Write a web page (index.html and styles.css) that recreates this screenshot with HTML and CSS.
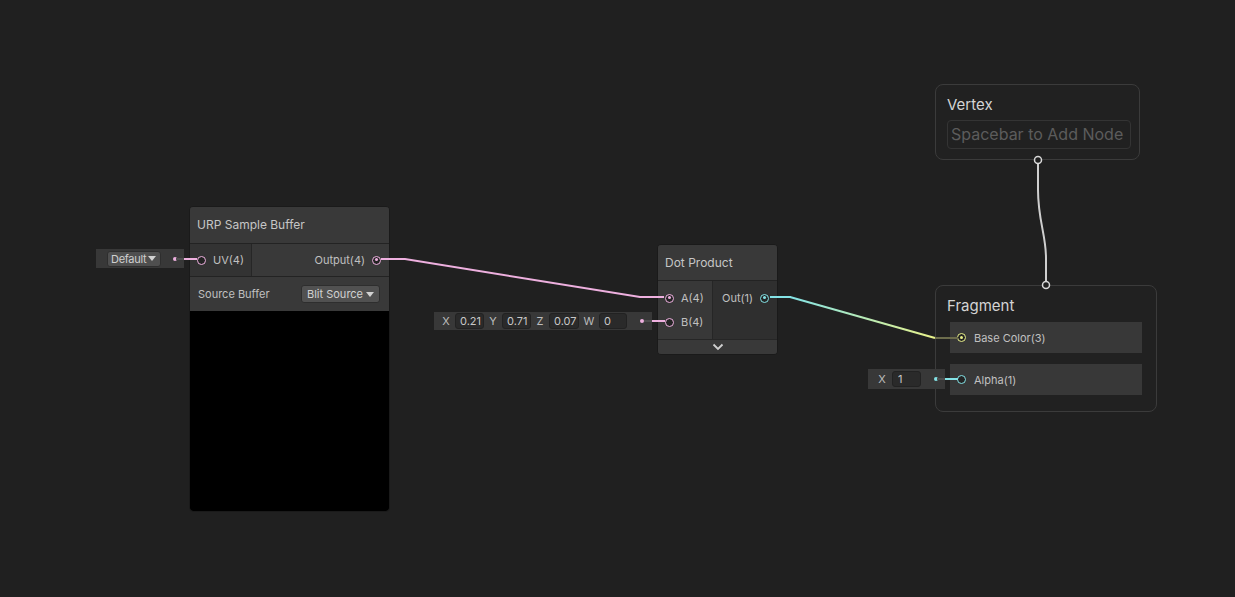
FILE: index.html
```html
<!DOCTYPE html>
<html>
<head>
<meta charset="utf-8">
<link rel="stylesheet" href="styles.css">
</head>
<body>
<div class="canvas">

  <!-- Vertex context -->
  <div class="context vertex">
    <div class="ctx-title">Vertex</div>
    <div class="placeholder">Spacebar to Add Node</div>
  </div>

  <!-- Fragment context -->
  <div class="context fragment">
    <div class="ctx-title">Fragment</div>
    <div class="block"><span class="port yellow on"></span><span class="label">Base Color(3)</span></div>
    <div class="block"><span class="port cyan"></span><span class="label">Alpha(1)</span></div>
  </div>

  <!-- URP Sample Buffer node -->
  <div class="node urp">
    <div class="node-title">URP Sample Buffer</div>
    <div class="ports">
      <div class="inputs">
        <div class="prow"><span class="port pink"></span><span class="label">UV(4)</span></div>
      </div>
      <div class="outputs">
        <div class="prow out"><span class="label">Output(4)</span><span class="port pink on"></span></div>
      </div>
    </div>
    <div class="setting">
      <span class="label">Source Buffer</span>
      <span class="dropdown">Blit Source<span class="tri"></span></span>
    </div>
    <div class="preview"></div>
  </div>

  <!-- Dot Product node -->
  <div class="node dot">
    <div class="node-title">Dot Product</div>
    <div class="ports">
      <div class="inputs">
        <div class="prow"><span class="port pink on"></span><span class="label">A(4)</span></div>
        <div class="prow"><span class="port pink"></span><span class="label">B(4)</span></div>
      </div>
      <div class="outputs">
        <div class="prow out"><span class="label">Out(1)</span><span class="port cyan on"></span></div>
      </div>
    </div>
    <div class="collapse">
      <svg width="12" height="8" viewBox="0 0 12 8"><path d="M1.5 1.5 L6 6 L10.5 1.5" fill="none" stroke="#d0d0d0" stroke-width="1.8"/></svg>
    </div>
  </div>

  <!-- inline input fields -->
  <div class="field f-default">
    <span class="dropdown small"><span class="dtext">Default</span><span class="tri"></span></span>
    <span class="fdot pink"></span>
  </div>

  <div class="field f-vec">
    <span class="axis">X</span><span class="num w29">0.21</span>
    <span class="axis">Y</span><span class="num w29">0.71</span>
    <span class="axis">Z</span><span class="num w30">0.07</span>
    <span class="axis aw">W</span><span class="num w28">0</span>
    <span class="fdot pink"></span>
  </div>

  <div class="field f-alpha">
    <span class="axis">X</span><span class="num wa">1</span>
    <span class="fdot cyan"></span>
  </div>

  <svg class="wires" width="1235" height="597" viewBox="0 0 1235 597">
    <defs>
      <linearGradient id="cy" x1="790" y1="0" x2="935" y2="0" gradientUnits="userSpaceOnUse">
        <stop offset="0" stop-color="#84e3e6"/>
        <stop offset="1" stop-color="#e9f28a"/>
      </linearGradient>
    </defs>
    <!-- Default -> UV -->
    <line x1="176" y1="259" x2="184" y2="259" stroke="#4e4e4e" stroke-width="2"/>
    <line x1="184" y1="259" x2="197" y2="259" stroke="#eeb0df" stroke-width="2"/>
    <!-- Output -> A -->
    <path d="M381 259 L405 259 L640 297 L664 297" fill="none" stroke="#eeb0df" stroke-width="2"/>
    <!-- Vec -> B -->
    <line x1="644" y1="321" x2="652" y2="321" stroke="#4e4e4e" stroke-width="2"/>
    <line x1="652" y1="321" x2="665" y2="321" stroke="#eeb0df" stroke-width="2"/>
    <!-- Out -> Base Color -->
    <line x1="770" y1="297" x2="791" y2="297" stroke="#84e3e6" stroke-width="2"/>
    <line x1="790" y1="297" x2="935" y2="338" stroke="url(#cy)" stroke-width="2"/>
    <line x1="935" y1="338" x2="958" y2="338" stroke="#6c6c4c" stroke-width="2"/>
    <!-- Alpha stub -->
    <line x1="937" y1="379" x2="945" y2="379" stroke="#4e4e4e" stroke-width="2"/>
    <line x1="945" y1="379" x2="958" y2="379" stroke="#84e3e6" stroke-width="2"/>
    <!-- Vertex -> Fragment flow -->
    <path d="M1038 164 L1038 190 C1038 220 1046 235 1046 258 L1046 281" fill="none" stroke="#cfcfcf" stroke-width="2"/>
    <circle cx="1038" cy="160" r="3.5" fill="#202020" stroke="#d8d8d8" stroke-width="1.5"/>
    <circle cx="1046" cy="285" r="3.5" fill="#202020" stroke="#d8d8d8" stroke-width="1.5"/>
  </svg>
</div>
</body>
</html>
```

FILE: styles.css
```css
* { box-sizing: border-box; }
html, body {
  margin: 0;
  padding: 0;
  background: #202020;
}
.canvas {
  position: relative;
  width: 1235px;
  height: 597px;
  overflow: hidden;
  background: #202020;
  font-family: "Inter", "Noto Sans", sans-serif;
  color: #c2c2c2;
}

/* ---------- generic node ---------- */
.node {
  position: absolute;
  background: #2e2e2e;
  border: 1px solid #1a1a1a;
  border-radius: 4px;
  overflow: hidden;
}
.node-title {
  display: flex;
  align-items: center;
  background: #393939;
  padding-left: 7px;
  padding-bottom: 1px;
  font-size: 12px;
  color: #c6c6c6;
  border-bottom: 1px solid #232323;
}
.ports {
  display: flex;
}
.inputs {
  display: flex;
  flex-direction: column;
  background: #383838;
  border-right: 1px solid #262626;
}
.outputs {
  flex: 1;
  display: flex;
  flex-direction: column;
  align-items: flex-end;
  background: #2f2f2f;
}
.prow {
  display: flex;
  align-items: center;
  font-size: 11px;
}
.prow .port { margin-right: 7px; }
.prow.out .port { margin-right: 0; margin-left: 7px; }
.label { font-size: 11px; color: #c0c0c0; white-space: nowrap; }

/* ports */
.port {
  position: relative;
  display: inline-block;
  width: 9px;
  height: 9px;
  border-radius: 50%;
  border: 1.5px solid #eeb0df;
  background: #242424;
  flex: none;
}
.port.cyan { border-color: #84e3e6; }
.port.yellow { border-color: #e9f08a; }
.port.on::after {
  content: "";
  position: absolute;
  left: 1.5px;
  top: 1.5px;
  width: 3px;
  height: 3px;
  border-radius: 50%;
  background: #eeb0df;
}
.port.cyan.on::after { background: #84e3e6; }
.port.yellow.on::after { background: #e9f08a; }

/* ---------- URP node ---------- */
.urp {
  left: 189px;
  top: 206px;
  width: 201px;
  height: 306px;
}
.urp .node-title { height: 37px; }
.urp .ports { height: 33px; border-bottom: 1px solid #232323; }
.urp .inputs { width: 62px; justify-content: center; padding-left: 7px; background: #333333; }
.urp .outputs { justify-content: center; padding-right: 8px; background: #393939; }
.setting {
  display: flex;
  align-items: center;
  justify-content: space-between;
  height: 34px;
  padding: 0 9px 0 8px;
  background: #393939;
}
.preview {
  height: 200px;
  background: #000;
  border-radius: 0 0 3px 3px;
}

.dropdown {
  display: inline-flex;
  align-items: center;
  justify-content: space-between;
  height: 18px;
  width: 79px;
  padding: 0 5px 0 5px;
  background: #515151;
  border: 1px solid #2e2e2e;
  border-radius: 3px;
  font-size: 11px;
  color: #d2d2d2;
}
.tri {
  width: 0;
  height: 0;
  flex: none;
  border-left: 4px solid transparent;
  border-right: 4px solid transparent;
  border-top: 5px solid #d2d2d2;
}

/* ---------- Dot Product node ---------- */
.dot {
  left: 657px;
  top: 244px;
  width: 121px;
  height: 111px;
}
.dot .node-title { height: 36px; }
.dot .ports { height: 58px; }
.dot .inputs { width: 55px; padding: 5px 0 0 7px; background: #383838; }
.dot .inputs .prow { height: 24px; }
.dot .outputs { padding: 5px 8px 0 0; background: #2f2f2f; }
.dot .outputs .prow { height: 24px; }
.collapse {
  height: 16px;
  display: flex;
  align-items: center;
  justify-content: center;
  background: #393939;
  border-top: 1px solid #262626;
  padding-bottom: 1px;
}

/* ---------- inline fields ---------- */
.field {
  position: absolute;
  display: flex;
  align-items: center;
  background: #383838;
  height: 19px;
  font-size: 11px;
  color: #c2c2c2;
}
.field > * { flex: none; }
.f-default {
  left: 96px;
  top: 249px;
  width: 88px;
  padding-left: 11px;
}
.dropdown.small {
  width: 54px;
  height: 16px;
  padding: 0 2px 0 3px;
  background: #4f4f4f;
  color: #cfcfcf;
  font-size: 11px;
  justify-content: flex-start;
}
.dtext {
  letter-spacing: -0.3px;
  white-space: nowrap;
}
.dropdown.small .tri { margin-left: 2px; }
.fdot {
  display: inline-block;
  width: 4px;
  height: 4px;
  border-radius: 50%;
  background: #eeb0df;
}
.fdot.cyan { background: #84e3e6; }
.f-default .fdot { margin-left: 12px; }

.f-vec {
  left: 434px;
  top: 312px;
  width: 218px;
  height: 18px;
  padding-left: 3px;
}
.axis {
  width: 18px;
  text-align: center;
  color: #bdbdbd;
}
.axis.aw { width: 20px; }
.num {
  display: inline-flex;
  align-items: center;
  height: 16px;
  padding-left: 4px;
  background: #2a2a2a;
  border: 1px solid #222;
  border-radius: 3px;
  color: #c8c8c8;
}
.w29 { width: 29px; }
.w30 { width: 30px; }
.w28 { width: 28px; }
.f-vec .fdot { margin-left: 13px; }

.f-alpha {
  left: 868px;
  top: 369px;
  width: 77px;
  height: 20px;
  padding-left: 4px;
}
.f-alpha .axis { width: 20px; }
.wa { width: 29px; padding-left: 5px; }
.f-alpha .fdot { margin-left: 13px; }

/* ---------- contexts ---------- */
.context {
  position: absolute;
  border: 1px solid #3b3b3b;
  border-radius: 8px;
  background: #212121;
  padding: 10px 14px 0 11px;
}
.ctx-title {
  font-size: 15px;
  color: #d4d4d4;
  height: 20px;
  line-height: 20px;
}
.vertex {
  left: 935px;
  top: 84px;
  width: 205px;
  height: 76px;
}
.placeholder {
  margin-top: 5px;
  height: 29px;
  width: 184px;
  border: 1px solid #343434;
  border-radius: 4px;
  font-size: 16px;
  color: #5c5c5c;
  display: flex;
  align-items: center;
  padding-left: 3px;
  padding-bottom: 1px;
  white-space: nowrap;
}
.fragment {
  left: 935px;
  top: 285px;
  width: 222px;
  height: 127px;
  padding-left: 11px;
  padding-right: 14px;
}
.fragment .ctx-title { margin-bottom: 6px; }
.block {
  display: flex;
  align-items: center;
  margin-left: 3px;
  height: 31px;
  background: #383838;
  padding-left: 7px;
  margin-bottom: 11px;
}
.block .port { margin-right: 8px; }

.wires {
  position: absolute;
  left: 0;
  top: 0;
  pointer-events: none;
}
```
